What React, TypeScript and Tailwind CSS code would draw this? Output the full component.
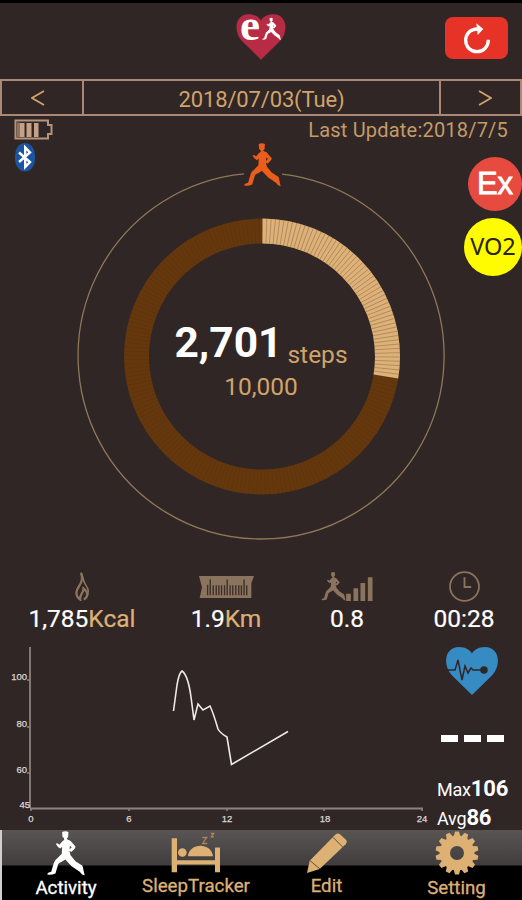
type IconProps = { className?: string };

function Runner({ className }: IconProps) {
  return (
    <svg viewBox="0 0 108 128" className={className} fill="currentColor" aria-hidden>
      <path d="M43 3Q52-2 61 3L60 18L56 21L58 24Q68 26 71 33L80 43Q82 47 78 51L69 60L62 55L70 46L65 42L64 58L67 69L81 86L101 99L107 126Q101 127 93 116L70 100L52 81L43 87Q34 90 32 94L24 121Q12 126 1 124Q0 118 12 116L19 92Q21 83 30 77L42 65L43 45L38 50Q29 45 25 36Q30 32 35 39L44 29L49 25L48 20L44 17Z" />
    </svg>
  );
}

function Heart({ className }: IconProps) {
  return (
    <svg viewBox="0 0 150 136" className={className} aria-hidden>
      <path d="M75 136L18 80C-9 52-3 0 38 0C56 0 70 8 75 19C80 8 94 0 112 0C153 0 159 52 132 80Z" fill="currentColor" />
    </svg>
  );
}

function Battery() {
  return (
    <svg viewBox="0 0 39 22" className="h-[22px] w-[39px]" aria-hidden>
      <path d="M1.5 1.5H34V6H37.5V15H34V19.500H1.500Z" fill="none" stroke="#b4947c" strokeWidth="2" />
      <path d="M3 3.500h3v14.500H3z" fill="#8f7362" />
      <path d="M6 4h4.500v14H6zM12.500 4h5v14h-5zM20 4h4.500v14H20z" fill="#c6a187" />
    </svg>
  );
}

function Bluetooth() {
  return (
    <svg viewBox="0 0 20 29" className="ml-[15px] h-[29px] w-5" aria-hidden>
      <rect width="20" height="28.500" rx="10" ry="12" fill="#1c559d" />
      <path d="M4 9.500L15 19L10.200 24V4.500L15 9.500L4 19" fill="none" stroke="#fff" strokeWidth="2.400" />
    </svg>
  );
}

function Reload() {
  return (
    <svg viewBox="0 0 84 96" className="mt-[1px] h-8 w-7" aria-hidden>
      <path d="M44 18C22 18 8 33 8 52C8 72 23 86 42 86C61 86 76 71 76 50" fill="none" stroke="#fff" strokeWidth="10" />
      <path d="M40 1L61 18L44 36Z" fill="#fff" />
    </svg>
  );
}

function Flame() {
  return (
    <svg viewBox="0 0 46 88" className="h-[29px] w-[15px]" fill="none" stroke="#8b745d" strokeWidth="7" aria-hidden>
      <path d="M18 2C28 26 14 38 7 53C0 70 7 78 16 84C13 68 27 65 26 50C39 59 43 74 27 84" />
      <path d="M20 4C26 18 24 25 31 36C42 52 45 64 33 79" strokeWidth="5" />
    </svg>
  );
}

function Ruler() {
  return (
    <svg viewBox="0 0 166 66" className="h-[22px] w-[55px]" aria-hidden>
      <path d="M0 0H166L158 22V66H2L9 34Z" fill="#8b745d" />
      <path d="M26 58V26M34 58V10M43 58V28M52 58V28M60 58V28M68 58V28M77 58V28M85 58V10M94 58V28M102 58V28M111 58V28M120 58V28M128 58V28M136 58V10M144 58V28" stroke="#3b2d29" strokeWidth="4" />
    </svg>
  );
}

function Intensity() {
  return (
    <div className="flex items-end text-[#8b745d]">
      <Runner className="h-[29px] w-[25px]" />
      <svg viewBox="0 0 80 72" className="h-6 w-[27px]" fill="currentColor" aria-hidden>
        <path d="M0 50H14V72H0zM22 34H36V72H22zM43 18H57V72H43zM65 1H79V72H65z" />
      </svg>
    </div>
  );
}

function Clock() {
  return (
    <svg viewBox="0 0 30 30" className="size-[31px]" fill="none" stroke="#8b745d" aria-hidden>
      <circle cx="15" cy="15" r="14" strokeWidth="1.700" />
      <path d="M15 6V15.500H21.500" strokeWidth="1.800" />
    </svg>
  );
}

function Bed() {
  return (
    <svg viewBox="0 0 150 122" className="h-[41px] w-[50px]" fill="#ddb074" aria-hidden>
      <path d="M2 18H18V84H132V46H147V120H132V97H18V120H2Z" />
      <circle cx="34" cy="61" r="13" />
      <path d="M51 72C53 32 120 28 126 72Z" />
      <path d="M94 16H107L95 34H109M120 4H128L121 14H129" fill="none" stroke="#a98557" strokeWidth="4" />
    </svg>
  );
}

function Pencil() {
  return (
    <svg viewBox="0 0 120 120" className="size-10" aria-hidden>
      <path d="M0 120L8 83L84 6Q91-1 98 3L117 20Q122 26 116 34L38 108Z" fill="#ddb074" />
      <path d="M9 83L39 108M78 13L108 43" stroke="#665034" strokeWidth="3" />
    </svg>
  );
}

function Gear() {
  return (
    <svg viewBox="-22 -22 44 44" className="size-11" aria-hidden>
      {Array.from({ length: 14 }, (_, i) => (
        <path key={i} d="M-3.500-16L-2-21.500H2L3.500-16Z" fill="#ddb074" transform={`rotate(${(i * 360) / 14})`} />
      ))}
      <circle r="12.200" fill="none" stroke="#ddb074" strokeWidth="10.400" />
    </svg>
  );
}

const STEPS = 2701;
const GOAL = 10000;
const SEGMENTS = 200;

function Gauge() {
  const r = 125.5;
  const len = 2 * Math.PI * r;
  const filled = Math.ceil((STEPS / GOAL) * SEGMENTS);
  const done = (len * filled) / SEGMENTS;
  return (
    <div className="relative h-[398px] w-[368px]">
      <svg viewBox="77 143 368 398" className="size-full" aria-hidden>
        <path d="M282 174.200A183 183 0 1 1 244 173.800" fill="none" stroke="#8f7858" strokeWidth="1.300" />
        <g transform="rotate(-89.800 262 356.500)" fill="none">
          <circle cx="262" cy="356.500" r={r} stroke="#64370d" strokeWidth="25" />
          <circle cx="262" cy="356.500" r={r} stroke="#502d12" strokeWidth="25" strokeDasharray="0.500 3.443" opacity="0.350" />
          <circle cx="262" cy="356.500" r={r} stroke="#ddb177" strokeWidth="25" strokeDasharray={`${done} ${len}`} />
          {Array.from({ length: filled - 1 }, (_, i) => (
            <path key={i} d="M375 356.500H400" stroke="#94714c" strokeWidth="0.700" opacity="0.800" transform={`rotate(${((i + 1) * 360) / SEGMENTS} 262 356.500)`} />
          ))}
        </g>
      </svg>
      <Runner className="absolute top-0 left-[167px] h-[44px] w-[37px] text-[#ec5d1b]" />
      <div className="absolute inset-x-0 top-[172px] flex flex-col items-center">
        <p className="flex items-baseline leading-[56px]">
          <span className="text-[42.5px] font-bold text-white">2,701</span>
          <span className="relative top-[6px] ml-[5px] text-[24.5px] text-[#d0a36a]">steps</span>
        </p>
        <p className="-mt-[6px] text-[24.5px] leading-8 text-[#d0a36a]">10,000</p>
      </div>
    </div>
  );
}

function HeartRateChart() {
  return (
    <svg viewBox="0 640 432 190" className="h-[190px] w-[432px] shrink-0" aria-hidden>
      <path d="M30 647V808M30 808.500H423" fill="none" stroke="#8c8381" strokeWidth="1.800" />
      <path d="M27 680H30M27 727H30M27 773H30M31 808V811M129 808V811M227 808V811M324 808V811M422 808V811" stroke="#8c8381" strokeWidth="1.500" />
      <path d="M173.500 711L177 685Q179 673 182 671Q188 675 191 697L194 720L198 704L203 710L210 706Q213 712 218 729Q220 733 227 737L231.500 764.500L288 731.500" fill="none" stroke="#eee9e7" strokeWidth="1.600" />
      <g fill="#ddd6d3" stroke="#ddd6d3" strokeWidth="0.250" fontFamily="Liberation Sans" fontSize="9.500" textAnchor="end">
        <text x="27" y="680">100</text>
        <text x="27" y="727">80</text>
        <text x="27" y="773">60</text>
        <text x="30" y="808">45</text>
      </g>
      <g fill="#ddd6d3" stroke="#ddd6d3" strokeWidth="0.250" fontFamily="Liberation Sans" fontSize="9.500" textAnchor="middle">
        <text x="31" y="822">0</text>
        <text x="129" y="822">6</text>
        <text x="227" y="822">12</text>
        <text x="325" y="822">18</text>
        <text x="422" y="822">24</text>
      </g>
    </svg>
  );
}

const stats = [
  { icon: <Flame />, value: "1,785", unit: "Kcal", box: "w-[164px]" },
  { icon: <Ruler />, value: "1.9", unit: "Km", box: "w-[124px]" },
  { icon: <Intensity />, value: "0.8", unit: "", box: "w-[118px]" },
  { icon: <Clock />, value: "00:28", unit: "", box: "w-[116px]" },
];

const tabs = [
  { icon: <Runner className="h-[45px] w-[38px]" />, label: "Activity", box: "w-[128px] gap-[1px] pt-px text-white" },
  { icon: <Bed />, label: "SleepTracker", box: "w-[132px] gap-[2px] pt-[2px] text-[#ddb074]" },
  { icon: <Pencil />, label: "Edit", box: "w-[129px] gap-[2px] pt-[3px] text-[#ddb074]" },
  { icon: <Gear />, label: "Setting", box: "w-[131px] gap-[2px] pt-px text-[#ddb074]" },
];

export default function App() {
  return (
    <div className="flex h-[900px] w-[522px] flex-col overflow-hidden bg-[#302626] font-['Roboto',sans-serif]">
      <header className="grid h-[79px] grid-cols-[1fr_50px_1fr] border-t-3 border-black pt-[11px]">
        <div />
        <div className="relative">
          <Heart className="h-[46px] w-[50px] text-[#b72c44]" />
          <span className="absolute -top-[9px] left-[4px] font-['Liberation_Serif',serif] text-[45px] leading-[40px] font-bold text-white">e</span>
          <Runner className="absolute top-[1px] left-[26px] h-[28px] w-[19px] text-white" />
        </div>
        <button type="button" aria-label="Update" className="mt-[3px] mr-[14px] grid h-[42px] w-[63px] place-items-center justify-self-end rounded-[8px] bg-[#e73327]">
          <Reload />
        </button>
      </header>

      <div className="flex h-[37px] border-y-2 border-[#ab8776] text-[#d0a36a]">
        <button type="button" aria-label="Previous day" className="grid w-[84px] place-items-center border-r-2 border-l-2 border-[#ab8776] pr-2">
          <svg viewBox="0 0 14 16" className="h-4 w-[14px]" fill="none" stroke="currentColor" strokeWidth="1.700">
            <path d="M13 1L1 8L13 15" />
          </svg>
        </button>
        <div className="grid flex-1 place-items-center pt-[2px] text-[22px] tracking-[-0.15px]">2018/07/03(Tue)</div>
        <button type="button" aria-label="Next day" className="grid w-[83px] place-items-center border-r-2 border-l-2 border-[#ab8776] pl-2">
          <svg viewBox="0 0 14 16" className="h-4 w-[14px]" fill="none" stroke="currentColor" strokeWidth="1.700">
            <path d="M1 1L13 8L1 15" />
          </svg>
        </button>
      </div>

      <div className="flex h-[27px] items-center justify-between px-[14px]">
        <Battery />
        <span className="text-[20px] tracking-[0.2px] text-[#c39b67]">Last Update:2018/7/5</span>
      </div>

      <main className="grid h-[398px] grid-cols-[77px_368px_77px]">
        <Bluetooth />
        <Gauge />
        <div className="flex flex-col items-end gap-[7px] pt-[14px]">
          <div className="grid size-[54px] place-items-center rounded-full bg-[#e74b40] font-['Liberation_Sans',sans-serif] text-[31px] text-white [-webkit-text-stroke:0.8px_white]">Ex</div>
          <div className="grid size-[58px] place-items-center rounded-full bg-[#fffb00] font-['Noto_Sans',sans-serif] text-[23.5px] text-[#28240e]">VO2</div>
        </div>
      </main>

      <section className="flex h-[99px] pt-[30px]">
        {stats.map((s) => (
          <div key={s.value} className={`flex flex-col items-center ${s.box}`}>
            <div className="flex h-[31px] items-center">{s.icon}</div>
            <p className="mt-px text-[24.5px] leading-8 text-white [-webkit-text-stroke:0.2px]">
              {s.value}
              <span className="text-[#ddb074]">{s.unit}</span>
            </p>
          </div>
        ))}
      </section>

      <section className="flex h-[190px]">
        <HeartRateChart />
        <div className="flex flex-1 flex-col pt-[7px]">
          <div className="relative ml-[13px] w-[54px]">
            <Heart className="h-[48px] w-[54px] text-[#378bc3]" />
            <svg viewBox="0 0 54 48" className="absolute inset-0" fill="none" stroke="#302626" strokeWidth="1.500" aria-hidden>
              <path d="M3 23H10L13 13L17 33L20 19L23 26L26 21L28 23H37" />
              <circle cx="39" cy="23" r="3" fill="#302626" />
            </svg>
          </div>
          <div className="mt-[40px] ml-[9px] flex gap-[6px]">
            <span className="h-[7px] w-[17px] bg-white" />
            <span className="h-[7px] w-[17px] bg-white" />
            <span className="h-[7px] w-[17px] bg-white" />
          </div>
          <div className="mt-[32px] ml-[5px] text-[18px] leading-[29px] whitespace-nowrap text-white">
            <p className="h-[29px] tracking-[-0.2px]">Max<b className="text-[22px]">106</b></p>
            <p className="h-[29px] tracking-[-0.2px]">Avg<b className="text-[22px]">86</b></p>
          </div>
        </div>
      </section>

      <nav className="flex h-[70px] border-l-2 border-[#d2cecd] bg-[linear-gradient(#595554_0,#403d3c_35px,#000_36px)]">
        {tabs.map((t) => (
          <div key={t.label} className={`flex flex-col items-center ${t.box}`}>
            {t.icon}
            <span className="text-[18.700px] leading-[22px] [-webkit-text-stroke:0.3px]">{t.label}</span>
          </div>
        ))}
      </nav>
    </div>
  );
}
